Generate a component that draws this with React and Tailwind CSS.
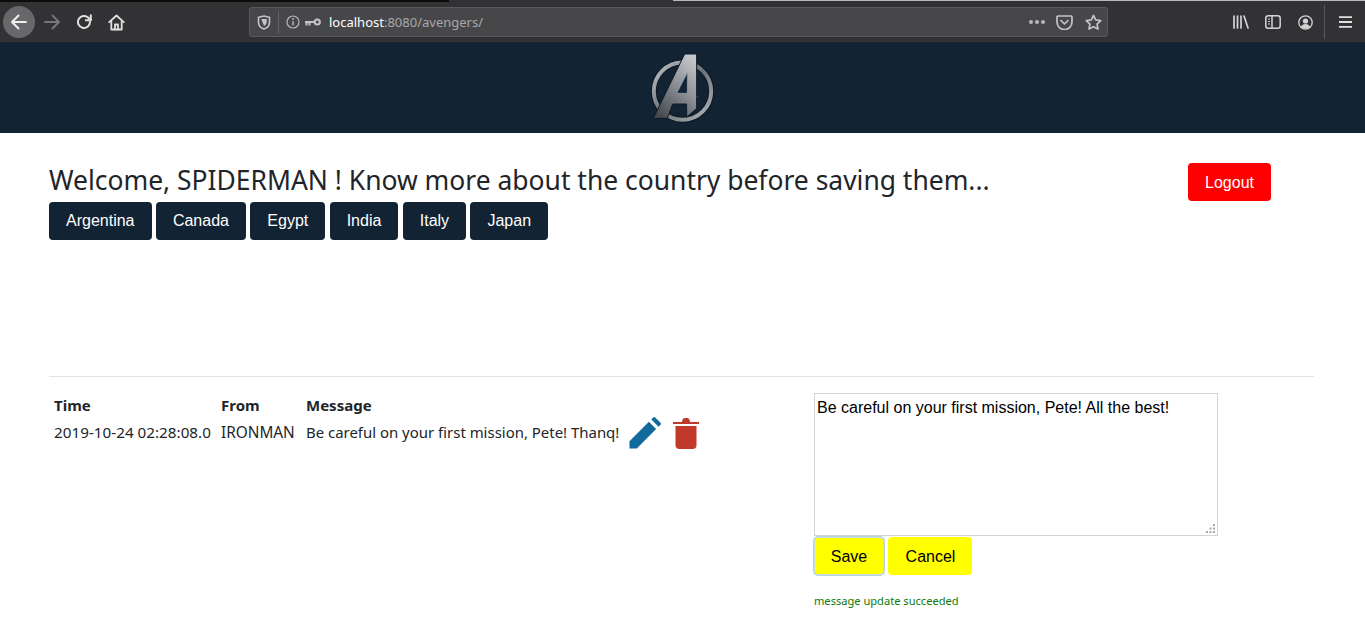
import React from "react";

const countries = ["Argentina", "Canada", "Egypt", "India", "Italy", "Japan"];

const BackIcon = () => (
  <svg width="18" height="16" viewBox="0 0 18 16" fill="none" stroke="#f0f0f0" strokeWidth="2" strokeLinecap="round" strokeLinejoin="round">
    <path d="M2 8h14M8.5 1.5 2 8l6.5 6.5" />
  </svg>
);

const ForwardIcon = () => (
  <svg width="18" height="16" viewBox="0 0 18 16" fill="none" stroke="#77777a" strokeWidth="2" strokeLinecap="round" strokeLinejoin="round">
    <path d="M16 8H2M9.5 1.5 16 8l-6.5 6.5" />
  </svg>
);

const ReloadIcon = () => (
  <svg width="16" height="16" viewBox="0 0 16 16" fill="none" stroke="#e0e0e0" strokeWidth="2" strokeLinecap="round" strokeLinejoin="round">
    <path d="M14 8a6 6 0 1 1-1.900-4.400L14.600 6" />
    <path d="M14.800 1.200v5h-5" />
  </svg>
);

const HomeIcon = () => (
  <svg width="17" height="17" viewBox="0 0 17 17" fill="none" stroke="#e0e0e0" strokeWidth="1.800" strokeLinejoin="round" strokeLinecap="round">
    <path d="M1.200 8.200 8.500 1.500l7.300 6.700" />
    <path d="M3.300 7v8.500h10.400V7" />
    <path d="M7 15.500v-5h3v5" />
  </svg>
);

const ShieldIcon = () => (
  <svg width="14" height="15" viewBox="0 0 14 15" fill="none" stroke="#c4c4c6" strokeWidth="1.600">
    <path d="M1.500 2.300 7 1l5.500 1.300v5C12.500 10.500 10 13 7 14 4 13 1.500 10.500 1.500 7.300z" />
    <path d="M4.300 4h5.400v3.300C9.700 8.800 8.500 10.200 7 11z" fill="#c4c4c6" stroke="none" />
  </svg>
);

const InfoIcon = () => (
  <svg width="14" height="14" viewBox="0 0 14 14" fill="none" stroke="#b8b8ba" strokeWidth="1.200">
    <circle cx="7" cy="7" r="6" />
    <path d="M7 6.200v4" strokeWidth="1.500" />
    <circle cx="7" cy="4" r="0.900" fill="#b8b8ba" stroke="none" />
  </svg>
);

const KeyIcon = () => (
  <svg width="16" height="9" viewBox="0 0 16 9" fill="none" stroke="#c4c4c6" strokeWidth="2">
    <circle cx="12.300" cy="4" r="2.600" />
    <path d="M9 4H0M1.500 4v3.500M4.500 4v3.500" />
  </svg>
);

const PocketIcon = () => (
  <svg width="17" height="15" viewBox="0 0 17 15" fill="none" stroke="#c4c4c6" strokeWidth="1.700" strokeLinecap="round" strokeLinejoin="round">
    <path d="M2 1h13a1 1 0 0 1 1 1v5a7.500 7.500 0 0 1-15 0V2a1 1 0 0 1 1-1z" />
    <path d="m5 5.500 3.500 3.500L12 5.500" />
  </svg>
);

const StarIcon = () => (
  <svg width="17" height="16" viewBox="0 0 17 16" fill="none" stroke="#c4c4c6" strokeWidth="1.700" strokeLinejoin="round">
    <path d="m8.500 1.300 2.200 4.600 5 .7-3.600 3.500.9 5-4.500-2.400-4.500 2.400.9-5L1.300 6.600l5-.7z" />
  </svg>
);

const LibraryIcon = () => (
  <svg width="16" height="14" viewBox="0 0 16 14" fill="none" stroke="#d4d4d6" strokeWidth="1.700" strokeLinecap="round">
    <path d="M1 1v12M4.500 1v12M8 1v12M11 1l4 12" />
  </svg>
);

const SidebarIcon = () => (
  <svg width="16" height="14" viewBox="0 0 16 14" fill="none" stroke="#d4d4d6" strokeWidth="1.500">
    <rect x="0.800" y="0.800" width="14.400" height="12.400" rx="2.500" />
    <path d="M7 1v12" />
    <path d="M3 4h2M3 6.500h2M3 9h2" strokeWidth="1" />
  </svg>
);

const AccountIcon = () => (
  <svg width="15" height="15" viewBox="0 0 15 15" fill="none" stroke="#d4d4d6" strokeWidth="1.300">
    <circle cx="7.500" cy="7.500" r="6.700" />
    <circle cx="7.500" cy="6" r="2.600" fill="#d4d4d6" stroke="none" />
    <path d="M3 12c.8-2.300 2.500-3 4.500-3s3.700.7 4.500 3a6.500 6.500 0 0 1-9 0z" fill="#d4d4d6" stroke="none" />
  </svg>
);

const MenuIcon = () => (
  <svg width="13" height="12" viewBox="0 0 13 12" stroke="#e0e0e0" strokeWidth="1.800">
    <path d="M0 1.200h13M0 6h13M0 10.800h13" />
  </svg>
);

// coordinates follow a 3x crop of the logo
const AvengersLogo = () => (
  <svg width="67" height="73" viewBox="57 33 201 219">
    <defs>
      <linearGradient id="ringGrad" x1="0" y1="0" x2="1" y2="1">
        <stop offset="0" stopColor="#c0c4c8" />
        <stop offset="0.5" stopColor="#6a7177" />
        <stop offset="1" stopColor="#b4b8bc" />
      </linearGradient>
      <linearGradient id="letterGrad" x1="0.800" y1="0" x2="0.200" y2="1">
        <stop offset="0" stopColor="#c4c8ca" />
        <stop offset="0.450" stopColor="#8e9296" />
        <stop offset="1" stopColor="#45494e" />
      </linearGradient>
    </defs>
    <circle cx="157.500" cy="153.500" r="86" fill="none" stroke="#0c1822" strokeWidth="18" />
    <circle cx="157.500" cy="153.500" r="86" fill="none" stroke="url(#ringGrad)" strokeWidth="12" />
    <path d="M170 138 202 170 170 206z" fill="#6a7279" stroke="#86a0b4" strokeWidth="3" />
    <path
      d="M164 42H200V205L170 232V192H128L112 235H70z"
      fill="url(#letterGrad)"
      stroke="#0e1a26"
      strokeWidth="3"
    />
    <path d="M172 98V160H140z" fill="#122334" stroke="#86a0b4" strokeWidth="2.500" />
  </svg>
);

const PencilIcon = () => (
  <svg width="32" height="32" viewBox="0 0 33 33">
    <path d="M0.500 32.500v-7.500L20.500 5l7.500 7.500L8 32.500z" fill="#126a9c" />
    <path d="M23 2.500 25 .5a1.500 1.500 0 0 1 2 0L32.500 6a1.500 1.500 0 0 1 0 2l-2 2z" fill="#126a9c" />
  </svg>
);

const TrashIcon = () => (
  <svg width="26" height="32" viewBox="0 0 26 32">
    <path d="M0 5h26v2H0z" fill="#c0392b" />
    <path d="M9 5c0-2 1-4 3-4h2c2 0 3 2 3 4z" fill="#c0392b" />
    <path d="M2.500 9h21v19a4 4 0 0 1-4 4h-13a4 4 0 0 1-4-4z" fill="#c0392b" />
  </svg>
);

const ResizeGrip = () => (
  <svg width="9" height="9" viewBox="0 0 9 9" fill="#a8a8a8">
    <path d="M7 0h2v2H7zM3.500 3.500h2v2h-2zM7 3.500h2v2H7zM0 7h2v2H0zM3.500 7h2v2h-2zM7 7h2v2H7z" />
  </svg>
);

const App = () => {
  return (
    <div className="min-h-[634px] bg-white font-['Noto_Sans',sans-serif] text-[#212529]">
      {/* browser toolbar */}
      <div className="bg-[#323234]">
        <div className="h-[2px] flex justify-between">
          <div className="w-[449px] bg-[#0c0c0d]"></div>
          <div className="w-[692px] h-px bg-[#b9b9bb]"></div>
        </div>
        <div className="h-[40px] flex items-center pl-[3px] pr-[13px]">
          <div className="w-8 h-8 rounded-full bg-[#68686a] flex items-center justify-center">
            <BackIcon />
          </div>
          <div className="ml-[8px]"><ForwardIcon /></div>
          <div className="ml-[15px]"><ReloadIcon /></div>
          <div className="ml-[16px]"><HomeIcon /></div>
          <div className="ml-[124px] w-[859px] h-[30px] bg-[#474749] border border-[#59595b] rounded-[3px] flex items-center">
            <div className="w-[28px] flex justify-center"><ShieldIcon /></div>
            <div className="w-px h-[23px] bg-[#626264]"></div>
            <div className="ml-[7px]"><InfoIcon /></div>
            <div className="ml-[5px]"><KeyIcon /></div>
            <div className="ml-[8px] text-[13px] text-[#a8a8aa] leading-none">
              <span className="text-white">localhost</span>:8080/avengers/
            </div>
            <div className="ml-auto flex items-center gap-[12px] pr-[5px]">
              <div className="flex gap-[2px] mr-[-1px]">
                <span className="w-[4px] h-[4px] rounded-full bg-[#b8b8ba]"></span>
                <span className="w-[4px] h-[4px] rounded-full bg-[#b8b8ba]"></span>
                <span className="w-[4px] h-[4px] rounded-full bg-[#b8b8ba]"></span>
              </div>
              <PocketIcon />
              <StarIcon />
            </div>
          </div>
          <div className="ml-auto flex items-center">
            <LibraryIcon />
            <div className="ml-[16px]"><SidebarIcon /></div>
            <div className="ml-[17px]"><AccountIcon /></div>
            <div className="ml-[11px] w-px h-[34px] bg-[#59595b]"></div>
            <div className="ml-[14px]"><MenuIcon /></div>
          </div>
        </div>
      </div>

      {/* banner */}
      <div className="h-[91px] bg-[#122334] flex items-center justify-center">
        <AvengersLogo />
      </div>

      {/* welcome */}
      <div className="ml-[49px] mr-[51px] pr-[43px] pt-[30px] h-[244px] border-b border-[#e3e3e3]">
        <div className="flex justify-between items-start">
          <h1 className="text-[26.450px] leading-[36px] mt-[-1px]">Welcome, SPIDERMAN ! Know more about the country before saving them...</h1>
          <button className="w-[83px] h-[38px] pt-px bg-[#ff0000] text-white rounded text-base font-['Liberation_Sans',sans-serif]">Logout</button>
        </div>
        <div className="flex gap-[4.400px] mt-[1px]">
          {countries.map((c) => (
            <button key={c} className="h-[38px] px-[17px] bg-[#122334] text-white rounded text-base font-['Liberation_Sans',sans-serif]">
              {c}
            </button>
          ))}
        </div>
      </div>

      {/* messages */}
      <div className="flex pl-[49px] pt-[16px]">
        <div className="w-[765px]">
          <table className="text-[15px] leading-[22px] mt-[1px]">
            <thead>
              <tr className="text-left">
                <th className="font-bold px-[5px] pb-[5px] w-[167px]">Time</th>
                <th className="font-bold px-[5px] pb-[5px] w-[85px]">From</th>
                <th className="font-bold px-[5px] pb-[5px]">Message</th>
                <th></th>
              </tr>
            </thead>
            <tbody>
              <tr>
                <td className="px-[5px] align-top text-[15.250px]">2019-10-24 02:28:08.0</td>
                <td className="px-[5px] align-top text-[15.350px]">IRONMAN</td>
                <td className="pl-[5px] align-top text-[14.950px]">Be careful on your first mission, Pete! Thanq!</td>
                <td className="pl-[10px] align-top">
                  <div className="flex items-start gap-[12px] mt-[-4px]">
                    <PencilIcon />
                    <TrashIcon />
                  </div>
                </td>
              </tr>
            </tbody>
          </table>
        </div>
        <div className="w-[404px]">
          <div className="relative">
            <textarea
              className="block w-[404px] h-[143px] border border-[#d4d4d4] px-[2px] pt-[5px] pb-[2px] text-base leading-[18px] text-black font-['Liberation_Sans',sans-serif] outline-none resize-none"
              defaultValue="Be careful on your first mission, Pete! All the best!"
            />
            <div className="absolute right-[3px] bottom-[3px] leading-none flex"><ResizeGrip /></div>
          </div>
          <div className="flex gap-1 mt-[1px]">
            <button className="w-[70px] h-[38px] pt-px bg-[#ffff00] text-black rounded text-base font-['Liberation_Sans',sans-serif] border border-[#c8dce4] ring-1 ring-[#b9d3e0]">Save</button>
            <button className="w-[84px] h-[38px] pt-px pl-px bg-[#ffff00] text-black rounded text-base font-['Liberation_Sans',sans-serif]">Cancel</button>
          </div>
          <p className="mt-[18px] text-[11.100px] leading-4 text-[#0a7a0a]">message update succeeded</p>
        </div>
      </div>
    </div>
  );
};

export default App;
